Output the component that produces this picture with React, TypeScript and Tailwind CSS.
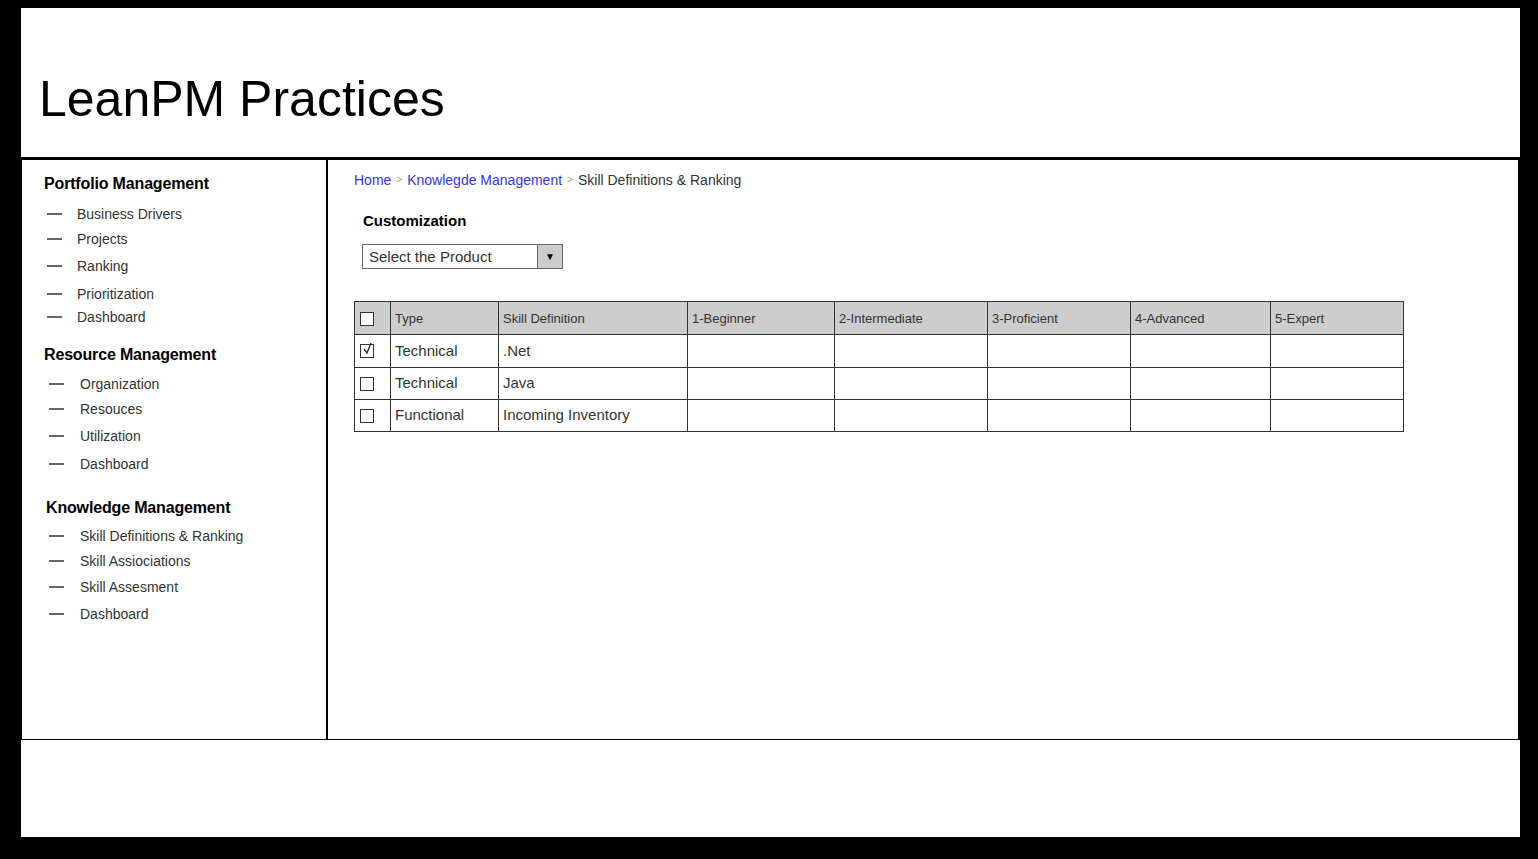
import React from "react";

interface NavItem {
  label: string;
  mt: string;
}
interface NavGroup {
  title: string;
  titleClass: string;
  dashClass: string;
  items: NavItem[];
}

const groups: NavGroup[] = [
  {
    title: "Portfolio Management",
    titleClass: "mt-0 ml-0",
    dashClass: "ml-[3px] mr-[15px]",
    items: [
      { label: "Business Drivers", mt: "mt-[10px]" },
      { label: "Projects", mt: "mt-[5px]" },
      { label: "Ranking", mt: "mt-[7px]" },
      { label: "Prioritization", mt: "mt-[8px]" },
      { label: "Dashboard", mt: "mt-[3px]" },
    ],
  },
  {
    title: "Resource Management",
    titleClass: "mt-[18px] ml-0",
    dashClass: "ml-[5px] mr-[16px]",
    items: [
      { label: "Organization", mt: "mt-[9px]" },
      { label: "Resouces", mt: "mt-[5px]" },
      { label: "Utilization", mt: "mt-[7px]" },
      { label: "Dashboard", mt: "mt-[8px]" },
    ],
  },
  {
    title: "Knowledge Management",
    titleClass: "mt-[24px] ml-[2px]",
    dashClass: "ml-[5px] mr-[16px]",
    items: [
      { label: "Skill Definitions & Ranking", mt: "mt-[8px]" },
      { label: "Skill Assiociations", mt: "mt-[5px]" },
      { label: "Skill Assesment", mt: "mt-[6px]" },
      { label: "Dashboard", mt: "mt-[7px]" },
    ],
  },
];

const columns = [
  { label: "Type", w: "w-[108px]" },
  { label: "Skill Definition", w: "w-[189px]" },
  { label: "1-Beginner", w: "w-[147px]" },
  { label: "2-Intermediate", w: "w-[153px]" },
  { label: "3-Proficient", w: "w-[143px]" },
  { label: "4-Advanced", w: "w-[140px]" },
  { label: "5-Expert", w: "w-[133px]" },
];

const rows = [
  { type: "Technical", skill: ".Net", checked: true, h: "h-[33px]" },
  { type: "Technical", skill: "Java", checked: false, h: "h-[32px]" },
  { type: "Functional", skill: "Incoming Inventory", checked: false, h: "h-[32px]" },
];

function Checkbox({ checked }: { checked: boolean }) {
  return (
    <div className="w-[14px] h-[14px] border border-[#333] bg-white relative">
      {checked && (
        <svg viewBox="0 0 14 14" className="absolute -top-[3px] left-0 w-[14px] h-[14px]">
          <path d="M3 7 L6 11 L10 1" fill="none" stroke="#222" strokeWidth="1.3" />
        </svg>
      )}
    </div>
  );
}

export default function App() {
  return (
    <div className="w-[1538px] h-[859px] bg-black pt-[8px] pl-[21px] pr-[18px] pb-[22px] flex flex-col font-['Liberation_Sans',Arial,sans-serif] text-[#222]">
      <div className="h-[149px] bg-white pt-[66px] pl-[18px]">
        <h1 className="text-[50px] leading-none text-black">LeanPM Practices</h1>
      </div>
      <div className="h-[3px] bg-black" />
      <div className="h-[579px] flex pl-[1px] pr-[2px]">
        <div className="w-[304px] bg-white pt-[14px] pl-[22px]">
          {groups.map((g) => (
            <div key={g.title}>
              <div className={`${g.titleClass} h-[20px] leading-5 text-[16px] font-bold text-black tracking-[-0.01em]`}>{g.title}</div>
              {g.items.map((it) => (
                <div key={it.label} className={`${it.mt} h-[20px] flex items-center`}>
                  <span className={`${g.dashClass} w-[15px] h-[2px] bg-[#666]`} />
                  <span className="text-[14px] leading-5 text-[#333]">{it.label}</span>
                </div>
              ))}
            </div>
          ))}
        </div>
        <div className="w-[2px] bg-black" />
        <div className="flex-1 bg-white pt-[10px] pl-[26px]">
          <div className="h-[20px] leading-5 text-[14px] flex items-center gap-[5px]">
            <span className="text-[#3434f0]">Home</span>
            <span className="text-[#999] text-[10px]">&gt;</span>
            <span className="text-[#3434f0]">Knowlegde Management</span>
            <span className="text-[#999] text-[10px]">&gt;</span>
            <span className="text-[#333]">Skill Definitions &amp; Ranking</span>
          </div>
          <div className="mt-[21px] ml-[9px] h-[20px] leading-5 text-[15px] font-bold text-black">Customization</div>
          <div className="mt-[13px] ml-[8px] w-[201px] h-[25px] border border-[#666] flex">
            <div className="flex-1 pl-[6px] text-[15px] leading-[23px] text-[#333]">Select the Product</div>
            <div className="w-[25px] border-l border-[#666] bg-[#cccccc] flex items-center justify-center text-[10px] text-black">▼</div>
          </div>
          <table className="mt-[32px] border-collapse border border-[#333] text-[#333]">
            <thead>
              <tr className="h-[33px] bg-[#cdcdcd]">
                <th className="w-[36px] border border-[#333] align-middle">
                  <div className="flex pl-[5px] pt-[1px]">
                    <Checkbox checked={false} />
                  </div>
                </th>
                {columns.map((c) => (
                  <th key={c.label} className={`${c.w} border border-[#333] text-left font-normal text-[13px] pl-[4px] pt-[2px]`}>
                    {c.label}
                  </th>
                ))}
              </tr>
            </thead>
            <tbody>
              {rows.map((r, i) => (
                <tr key={i} className={`${r.h} bg-white`}>
                  <td className="border border-[#333]">
                    <div className="flex pl-[5px]">
                      <Checkbox checked={r.checked} />
                    </div>
                  </td>
                  <td className="border border-[#333] text-[15px] pl-[4px]">{r.type}</td>
                  <td className="border border-[#333] text-[15px] pl-[4px]">{r.skill}</td>
                  <td className="border border-[#333]" />
                  <td className="border border-[#333]" />
                  <td className="border border-[#333]" />
                  <td className="border border-[#333]" />
                  <td className="border border-[#333]" />
                </tr>
              ))}
            </tbody>
          </table>
        </div>
      </div>
      <div className="h-[1px] bg-black" />
      <div className="flex-1 bg-white" />
    </div>
  );
}
